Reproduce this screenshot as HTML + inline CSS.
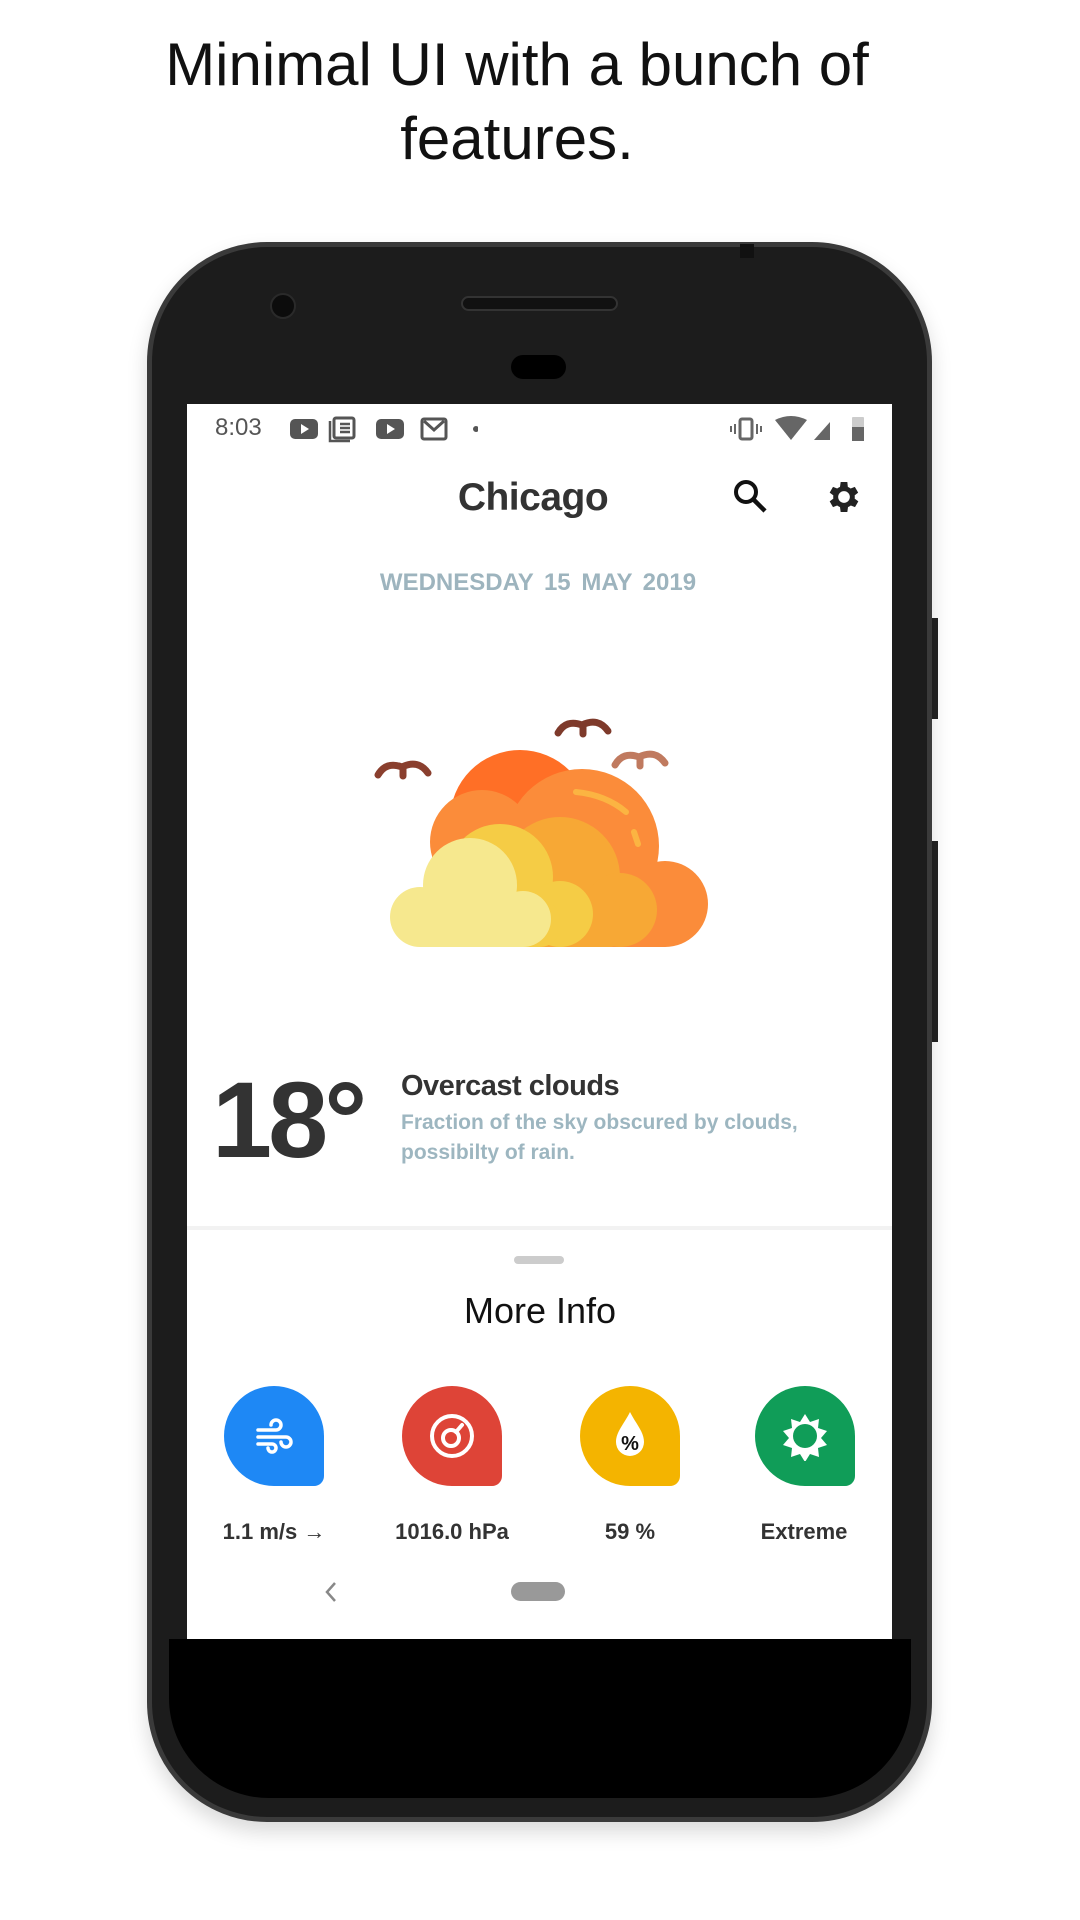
<!DOCTYPE html>
<html><head><meta charset="utf-8"><style>
*{margin:0;padding:0;box-sizing:border-box}
body{width:1080px;height:1920px;background:#fff;position:relative;overflow:hidden;font-family:"Liberation Sans",sans-serif}
.abs{position:absolute}
.title{left:0;width:1034px;text-align:center;font-size:60px;color:#111;line-height:74px;top:28px}
.phone{left:147px;top:242px;width:785px;height:1580px;border-radius:120px;background:#1c1c1c;border:5px solid #3a3a3a;box-shadow:0 10px 20px rgba(0,0,0,.15)}
.screen{left:187px;top:404px;width:705px;height:1235px;background:#fff}
.c{transform:translate(-50%,-50%);white-space:nowrap}
.icon{width:100px;height:100px;border-radius:50px 50px 10px 50px}
.lbl{font-size:22px;color:#333;font-weight:bold}
</style></head><body>
<div class="abs title">Minimal UI with a bunch of<br>features.</div>
<div class="abs" style="left:930px;top:618px;width:8px;height:101px;background:#222"></div>
<div class="abs" style="left:930px;top:841px;width:8px;height:201px;background:#222"></div>
<div class="abs phone"></div>
<div class="abs" style="left:740px;top:244px;width:14px;height:14px;background:#111"></div>
<div class="abs" style="left:270px;top:293px;width:26px;height:26px;border-radius:50%;background:#0c0c0c;border:2px solid #2a2a2a"></div>
<div class="abs" style="left:461px;top:296px;width:157px;height:15px;border-radius:8px;background:#111;border:2px solid #333"></div>
<div class="abs" style="left:511px;top:355px;width:55px;height:24px;border-radius:12px;background:#000"></div>
<div class="abs" style="left:169px;top:1639px;width:742px;height:159px;background:#000;border-radius:0 0 100px 100px"></div>
<div class="abs screen"></div>
<!-- status bar -->
<div class="abs" style="left:215px;top:414px;font-size:24px;color:#555">8:03</div>
<svg class="abs" style="left:288px;top:415px" width="190" height="28" viewBox="0 0 190 28">
<rect x="2" y="4" width="28" height="20" rx="5" fill="#555"/><path d="M13 9l8 5-8 5z" fill="#fff"/>
<rect x="46" y="3" width="20" height="20" rx="2" fill="none" stroke="#555" stroke-width="3"/><path d="M52 9h10M52 13h10M52 17h10M42 6v20h20" stroke="#555" stroke-width="2.5" fill="none"/>
<rect x="88" y="4" width="28" height="20" rx="5" fill="#555"/><path d="M99 9l8 5-8 5z" fill="#fff"/>
<rect x="134" y="4" width="24" height="20" rx="2" fill="none" stroke="#555" stroke-width="3"/><path d="M136 6l10 9 10-9" stroke="#555" stroke-width="3" fill="none"/>
<circle cx="188" cy="14" r="3" fill="#555"/></svg>
<svg class="abs" style="left:730px;top:414px" width="140" height="30" viewBox="0 0 140 30">
<rect x="10" y="5" width="12" height="20" rx="2" fill="none" stroke="#666" stroke-width="3"/><path d="M5 10v10M27 10v10M1 12v6M31 12v6" stroke="#666" stroke-width="2"/>
<path d="M45 6q16-8 32 0l-16 20z" fill="#666"/>
<path d="M84 26l16-18v18z" fill="#666"/>
<rect x="122" y="3" width="12" height="24" rx="1" fill="#ccc"/><rect x="122" y="13" width="12" height="14" fill="#666"/></svg>
<!-- header -->
<div class="abs c" style="left:533px;top:498px;font-size:39px;color:#333;font-weight:bold;letter-spacing:-.5px">Chicago</div>
<svg class="abs" style="left:732px;top:478px" width="38" height="38" viewBox="0 0 38 38"><circle cx="14" cy="14" r="10" fill="none" stroke="#111" stroke-width="4"/><path d="M21 21l12 12" stroke="#111" stroke-width="4.5"/></svg>
<svg class="abs" style="left:824px;top:477px" width="40" height="40" viewBox="0 0 24 24"><path fill="#222" d="M19.4 13a7.5 7.5 0 000-2l2.1-1.6-2-3.5-2.5 1a7.3 7.3 0 00-1.7-1L15 3h-4l-.4 2.9a7.3 7.3 0 00-1.7 1l-2.5-1-2 3.5L6.6 11a7.5 7.5 0 000 2l-2.2 1.6 2 3.5 2.5-1a7.3 7.3 0 001.7 1L11 21h4l.4-2.9a7.3 7.3 0 001.7-1l2.5 1 2-3.5zM13 15.5a3.5 3.5 0 110-7 3.5 3.5 0 010 7z" transform="translate(-1 0)"/></svg>
<div class="abs c" style="left:538px;top:583px;font-size:24px;color:#9db4be;font-weight:bold;word-spacing:4px">WEDNESDAY 15 MAY 2019</div>
<!-- cloud -->
<svg class="abs" style="left:360px;top:690px" width="360" height="270" viewBox="360 690 360 270">
<g fill="none" stroke-linecap="round" stroke-width="7">
<path d="M378 775q8-14 24-8 M402 767q16-8 26 6 M403 768v8" stroke="#8a3f2e"/>
<path d="M558 733q8-14 24-8 M582 725q16-8 26 6 M583 726v8" stroke="#7e3a2b"/>
<path d="M615 765q8-14 24-8 M639 757q16-8 26 6 M640 758v8" stroke="#c07a5f"/>
</g>
<circle cx="520" cy="820" r="70" fill="#ff6f26"/>
<circle cx="482" cy="842" r="52" fill="#fb8c3a"/>
<rect x="432" y="840" width="100" height="107" fill="#fb8c3a"/>
<circle cx="582" cy="846" r="77" fill="#fb8c3a"/>
<circle cx="665" cy="904" r="43" fill="#fb8c3a"/>
<rect x="560" y="880" width="105" height="67" fill="#fb8c3a"/>
<circle cx="560" cy="877" r="60" fill="#f7a835"/>
<circle cx="620" cy="910" r="37" fill="#f7a835"/>
<rect x="520" y="900" width="100" height="47" rx="10" fill="#f7a835"/>
<circle cx="500" cy="877" r="53" fill="#f5cc45"/>
<circle cx="560" cy="914" r="33" fill="#f5cc45"/>
<rect x="460" y="900" width="100" height="47" rx="20" fill="#f5cc45"/>
<circle cx="470" cy="885" r="47" fill="#f6e88e"/>
<circle cx="420" cy="917" r="30" fill="#f6e88e"/>
<circle cx="523" cy="919" r="28" fill="#f6e88e"/>
<rect x="420" y="910" width="103" height="37" fill="#f6e88e"/>
<path d="M576 792q30 3 50 20" stroke="#fbb442" stroke-width="6" stroke-linecap="round" fill="none"/>
<path d="M634 832l4 12" stroke="#fbb442" stroke-width="6" stroke-linecap="round"/>
</svg>
<!-- temp -->
<div class="abs" style="left:212px;top:1060px;font-size:108px;color:#333;font-weight:bold;letter-spacing:-4px;line-height:120px">18°</div>
<div class="abs" style="left:401px;top:1070px;font-size:29px;color:#333;font-weight:bold;letter-spacing:-.5px">Overcast clouds</div>
<div class="abs" style="left:401px;top:1108px;font-size:21px;color:#9db6c0;font-weight:bold;line-height:30px">Fraction of the sky obscured by clouds,<br>possibilty of rain.</div>
<div class="abs" style="left:187px;top:1226px;width:705px;height:4px;background:#f2f2f2"></div>
<div class="abs" style="left:514px;top:1256px;width:50px;height:8px;border-radius:4px;background:#ccc"></div>
<div class="abs c" style="left:540px;top:1311px;font-size:36px;color:#111">More Info</div>
<!-- icons -->
<div class="abs icon" style="left:224px;top:1386px;background:#1e88f5"></div>
<svg class="abs" style="left:254px;top:1416px" width="40" height="40" viewBox="0 0 40 40" fill="none" stroke="#fff" stroke-width="3.5" stroke-linecap="round"><path d="M4 14h18a5 5 0 10-5-5M4 21h28a5 5 0 11-5 5M4 28h14a4 4 0 11-4 4"/></svg>
<div class="abs icon" style="left:402px;top:1386px;background:#de4437"></div>
<svg class="abs" style="left:427px;top:1411px" width="50" height="50" viewBox="0 0 50 50" fill="none" stroke="#fff" stroke-width="4"><circle cx="25" cy="25" r="20"/><circle cx="24" cy="27" r="8"/><path d="M29 21l6-7" stroke-linecap="round"/></svg>
<div class="abs icon" style="left:580px;top:1386px;background:#f4b400"></div>
<svg class="abs" style="left:610px;top:1408px" width="40" height="56" viewBox="0 0 40 56"><path d="M20 4C14 16 6 24 6 34a14 14 0 0028 0C34 24 26 16 20 4z" fill="#fff"/><text x="20" y="42" font-size="20" font-weight="bold" text-anchor="middle" font-family="Liberation Sans" fill="#111">%</text></svg>
<div class="abs icon" style="left:755px;top:1386px;background:#109d58"></div>
<svg class="abs" style="left:780px;top:1411px" width="50" height="50" viewBox="0 0 50 50"><path d="M25 3l5 8 9-3-1 9 9 3-6 7 6 7-9 3 1 9-9-3-5 8-5-8-9 3 1-9-9-3 6-7-6-7 9-3-1-9 9 3z" fill="#fff"/><circle cx="25" cy="25" r="12" fill="#109d58"/></svg>
<div class="abs c lbl" style="left:274px;top:1532px">1.1 m/s →</div>
<div class="abs c lbl" style="left:452px;top:1532px">1016.0 hPa</div>
<div class="abs c lbl" style="left:630px;top:1532px">59 %</div>
<div class="abs c lbl" style="left:804px;top:1532px">Extreme</div>
<svg class="abs" style="left:322px;top:1580px" width="18" height="24" viewBox="0 0 18 24"><path d="M13 3L5 12l8 9" stroke="#888" stroke-width="2.5" fill="none"/></svg>
<div class="abs" style="left:511px;top:1582px;width:54px;height:19px;border-radius:10px;background:#999"></div>
</body></html>
